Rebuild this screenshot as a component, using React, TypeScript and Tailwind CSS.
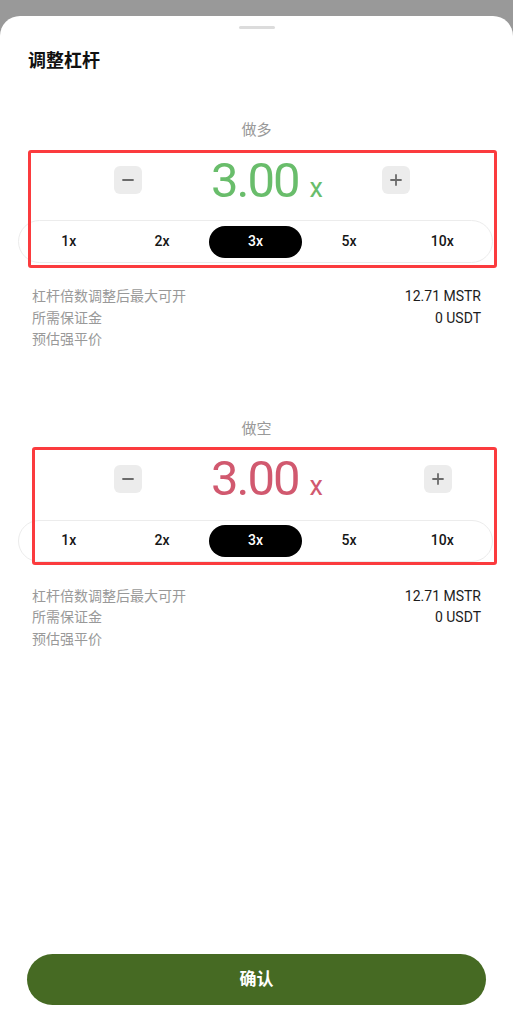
import React, { useState } from "react";

const LEVELS = ["1x", "2x", "3x", "5x", "10x"];

function MinusIcon() {
  return (
    <svg width="14" height="14" viewBox="0 0 14 14" fill="none">
      <path d="M2 7h10" stroke="#6b6b6b" strokeWidth="1.8" strokeLinecap="round" />
    </svg>
  );
}

function PlusIcon() {
  return (
    <svg width="14" height="14" viewBox="0 0 14 14" fill="none">
      <path d="M2 7h10M7 2v10" stroke="#6b6b6b" strokeWidth="1.8" strokeLinecap="round" />
    </svg>
  );
}

function LeverageBlock({
  side,
  value,
  onChange,
}: {
  side: "long" | "short";
  value: string;
  onChange: (v: string) => void;
}) {
  const isLong = side === "long";
  const numColor = isLong ? "text-[#69bd6b]" : "text-[#d1596f]";

  return (
    <div className="relative">
      {/* annotation frame */}
      {isLong ? (
        <div className="pointer-events-none absolute top-[-6px] left-[28px] w-[469px] h-[118px] rounded-[3px] border-[3px] border-[#fb3b3e]" />
      ) : (
        <div className="pointer-events-none absolute top-[-8px] left-[32px] w-[465px] h-[118px] rounded-[3px] border-[3px] border-[#fb3b3e]" />
      )}

      <div className="flex h-[48px] items-center pl-[114px]">
        <button
          type="button"
          className="flex h-7 w-7 items-center justify-center rounded-md bg-[#ececec]"
        >
          <MinusIcon />
        </button>
        <div className={`ml-[69px] flex items-baseline ${numColor}`}>
          <span className="text-[49px] leading-none font-normal tracking-[-2px]">3.00</span>
          <span className="ml-[11px] text-[27px] leading-none">x</span>
        </div>
        <button
          type="button"
          className={`${isLong ? "ml-[59px]" : "ml-[101px]"} flex h-7 w-7 items-center justify-center rounded-md bg-[#ececec]`}
        >
          <PlusIcon />
        </button>
      </div>

      <div
        className={`${isLong ? "mt-[16px] h-[43px]" : "mt-[17px] h-[42px]"} ml-[18px] flex w-[475px] items-center rounded-full border border-[#ececec] px-[3px]`}
      >
        {LEVELS.map((l) => (
          <button
            key={l}
            type="button"
            onClick={() => onChange(l)}
            className={`flex h-[32px] flex-1 items-center justify-center rounded-full text-[14px] font-medium ${
              value === l ? "bg-black text-white" : "text-[#161616]"
            }`}
          >
            {l}
          </button>
        ))}
      </div>
    </div>
  );
}

function InfoRows({ className }: { className?: string }) {
  return (
    <div className={`px-[32px] text-[14px] leading-[21.5px] ${className || ""}`}>
      <div className="flex justify-between">
        <span className="text-[#999999]">杠杆倍数调整后最大可开</span>
        <span className="text-[#1c1c1c]">12.71 MSTR</span>
      </div>
      <div className="flex justify-between">
        <span className="text-[#999999]">所需保证金</span>
        <span className="text-[#1c1c1c]">0 USDT</span>
      </div>
      <div className="flex justify-between">
        <span className="text-[#999999]">预估强平价</span>
      </div>
    </div>
  );
}

export default function App() {
  const [longLev, setLongLev] = useState("3x");
  const [shortLev, setShortLev] = useState("3x");

  return (
    <div
      className="flex h-[1034px] w-[513px] flex-col overflow-hidden bg-[#999999]"
      style={{ fontFamily: 'Roboto, "Noto Sans CJK SC", sans-serif' }}
    >
      <div className="h-[16px] shrink-0" />
      <div className="flex flex-1 flex-col rounded-t-[20px] bg-white">
        <div className="mx-auto mt-[10px] h-[3px] w-9 rounded-full bg-[#dcdcdc]" />

        <h1 className="mt-[20px] pl-[28px] text-[18px] leading-[24px] font-bold text-[#111]">
          调整杠杆
        </h1>

        <div className="mt-[47px] text-center text-[15px] leading-[20px] text-[#999999]">做多</div>
        <div className="mt-[16px]">
          <LeverageBlock side="long" value={longLev} onChange={setLongLev} />
        </div>
        <InfoRows className="mt-[23px]" />

        <div className="mt-[68px] text-center text-[15px] leading-[20px] text-[#999999]">做空</div>
        <div className="mt-[16px]">
          <LeverageBlock side="short" value={shortLev} onChange={setShortLev} />
        </div>
        <InfoRows className="mt-[24px]" />

        <button
          type="button"
          className="mx-[27px] mt-auto mb-[29px] h-[51px] rounded-full bg-[#466a23] text-[17px] font-bold text-white"
        >
          确认
        </button>
      </div>
    </div>
  );
}
